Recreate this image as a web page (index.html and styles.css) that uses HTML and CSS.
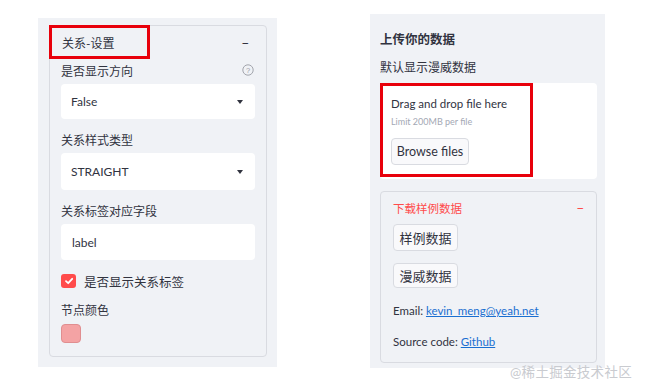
FILE: index.html
```html
<!DOCTYPE html>
<html lang="zh">
<head>
  <meta charset="UTF-8" />
  <title>关系设置</title>
  <link rel="stylesheet" href="styles.css">
</head>
<body>
  <div class="page">
    <div class="panel left">
      <div class="expander">
        <div class="exp-head">
          <span class="mark head-mark">关系-设置</span>
          <span class="minus">&minus;</span>
        </div>
        <div class="exp-body">
          <div class="label-row">
            <span>是否显示方向</span>
            <svg class="help" width="12" height="12" viewBox="0 0 12 12"><circle cx="6" cy="6" r="5.2" fill="none" stroke="#9a9ca4" stroke-width="0.9"/><text x="6" y="8.6" text-anchor="middle" font-size="7.5" fill="#9a9ca4" font-family="Liberation Sans, sans-serif">?</text></svg>
          </div>
          <div class="select"><span>False</span><span class="caret"></span></div>

          <div class="label-row"><span>关系样式类型</span></div>
          <div class="select tall"><span>STRAIGHT</span><span class="caret"></span></div>

          <div class="label-row"><span>关系标签对应字段</span></div>
          <div class="select tall text-input"><span>label</span></div>

          <div class="check-row">
            <span class="checkbox">
              <svg width="10" height="10" viewBox="0 0 10 10"><path d="M2 5.2 L4.2 7.2 L8.2 2.8" fill="none" stroke="#fff" stroke-width="1.8" stroke-linecap="round" stroke-linejoin="round"/></svg>
            </span>
            <span>是否显示关系标签</span>
          </div>

          <div class="label-row color-label"><span>节点颜色</span></div>
          <div class="swatch"></div>
        </div>
      </div>
    </div>

    <div class="panel right">
      <div class="title">上传你的数据</div>
      <div class="subtitle">默认显示漫威数据</div>
      <div class="dropzone">
        <div class="mark drop-mark">
          <div class="drop-title">Drag and drop file here</div>
          <div class="drop-limit">Limit 200MB per file</div>
          <div class="btn browse">Browse files</div>
        </div>
      </div>
      <div class="expander download">
        <div class="exp-head red">
          <span>下载样例数据</span>
          <span class="minus">&minus;</span>
        </div>
        <div class="exp-body">
          <div class="btn">样例数据</div>
          <div class="btn">漫威数据</div>
          <p class="line">Email: <a href="#">kevin_meng@yeah.net</a></p>
          <p class="line">Source code: <a href="#">Github</a></p>
        </div>
      </div>
    </div>
  </div>
  <div class="watermark">@稀土掘金技术社区</div>
</body>
</html>
```

FILE: styles.css
```css
body {
  margin: 0;
  background: #fff;
  font-family: Lato, 'Noto Sans CJK SC', sans-serif;
  color: #31333f;
  font-size: 12px;
  width: 645px;
  height: 390px;
  position: relative;
  overflow: hidden;
}
.page {
  display: flex;
  align-items: flex-start;
  padding-left: 38px;
  gap: 93px;
}
.panel {
  background-color: #f0f2f6;
  box-sizing: border-box;
}
.left {
  margin-top: 18px;
  width: 239px;
  height: 349px;
  padding: 7px 10px 0 11px;
}
.right {
  margin-top: 14px;
  width: 235px;
  height: 354px;
  padding: 17px 8px 0 10px;
}
.expander {
  border: 1px solid #d9dbe1;
  border-radius: 4px;
  box-sizing: border-box;
}
.left .expander {
  height: 332px;
}
.exp-head {
  display: flex;
  justify-content: space-between;
  align-items: center;
  height: 33px;
  padding-right: 17px;
}
.minus {
  font-size: 13px;
  color: #31333f;
}
.mark {
  border: 3px solid #e8000b;
  box-sizing: border-box;
}
.head-mark {
  display: flex;
  align-items: center;
  width: 101px;
  height: 34px;
  margin: -1px 0 0 -1px;
  padding-left: 10px;
  font-size: 12px;
}
.exp-body {
  padding: 0 11px 0 11px;
}
.label-row {
  display: flex;
  justify-content: space-between;
  align-items: center;
  height: 16px;
  margin: 3px 0 6px;
}
.help {
  margin-right: 1px;
}
.select {
  display: flex;
  justify-content: space-between;
  align-items: center;
  height: 35px;
  background: #fff;
  border-radius: 4px;
  padding: 0 12px 0 10px;
  margin-bottom: 12px;
  font-size: 12px;
}
.tall {
  height: 37px;
}
.caret {
  width: 0;
  height: 0;
  border-left: 3px solid transparent;
  border-right: 3px solid transparent;
  border-top: 4px solid #31333f;
}
.text-input {
  height: 36px;
  padding-left: 11px;
  margin-bottom: 0;
}
.check-row {
  display: flex;
  align-items: center;
  gap: 8px;
  height: 14px;
  margin-top: 14px;
  font-size: 12.5px;
}
.checkbox {
  display: flex;
  align-items: center;
  justify-content: center;
  width: 15px;
  height: 14px;
  background: #ff4b4b;
  border-radius: 3px;
}
.color-label {
  margin: 13px 0 7px;
}
.swatch {
  width: 20px;
  height: 19px;
  background: #f4a3a4;
  border: 1px solid #e08e90;
  border-radius: 4px;
  box-sizing: border-box;
}
.title {
  font-weight: 700;
  font-size: 12.5px;
  height: 18px;
  line-height: 18px;
}
.subtitle {
  margin-top: 11px;
  height: 16px;
  line-height: 16px;
}
.dropzone {
  margin-top: 7px;
  background: #fff;
  border-radius: 4px;
  height: 96px;
}
.drop-mark {
  width: 153px;
  height: 94px;
  padding: 10px 0 0 8px;
}
.drop-title {
  font-size: 11.5px;
  line-height: 16px;
}
.drop-limit {
  font-size: 9px;
  color: #a3a8b4;
  margin-top: 4px;
}
.btn {
  display: inline-flex;
  align-items: center;
  justify-content: center;
  box-sizing: border-box;
  height: 27px;
  padding: 0 8px;
  background: #f9f9fb;
  border: 1px solid #d9dbe1;
  border-radius: 4px;
  font-size: 12px;
  white-space: nowrap;
}
.browse {
  margin-top: 11px;
  width: 78px;
  font-size: 12.5px;
}
.download {
  margin-top: 12px;
  height: 172px;
}
.red {
  color: #ff4b4b;
  padding-left: 12px;
  padding-right: 12px;
  height: 32px;
  font-size: 11.5px;
}
.red .minus {
  color: #ff4b4b;
}
.download .exp-body {
  display: flex;
  flex-direction: column;
  align-items: flex-start;
  padding-left: 12px;
}
.download .btn {
  font-size: 13px;
  width: 65px;
  margin-bottom: 12px;
}
.download .btn + .btn {
  height: 25px;
}
.line {
  margin: 3px 0 12px;
  font-size: 11.5px;
  line-height: 16px;
}
.line a {
  color: #1a6fd1;
}
.watermark {
  position: absolute;
  left: 510px;
  top: 361px;
  font-size: 13.5px;
  color: #c9cbd0;
  letter-spacing: 0.3px;
}
```
